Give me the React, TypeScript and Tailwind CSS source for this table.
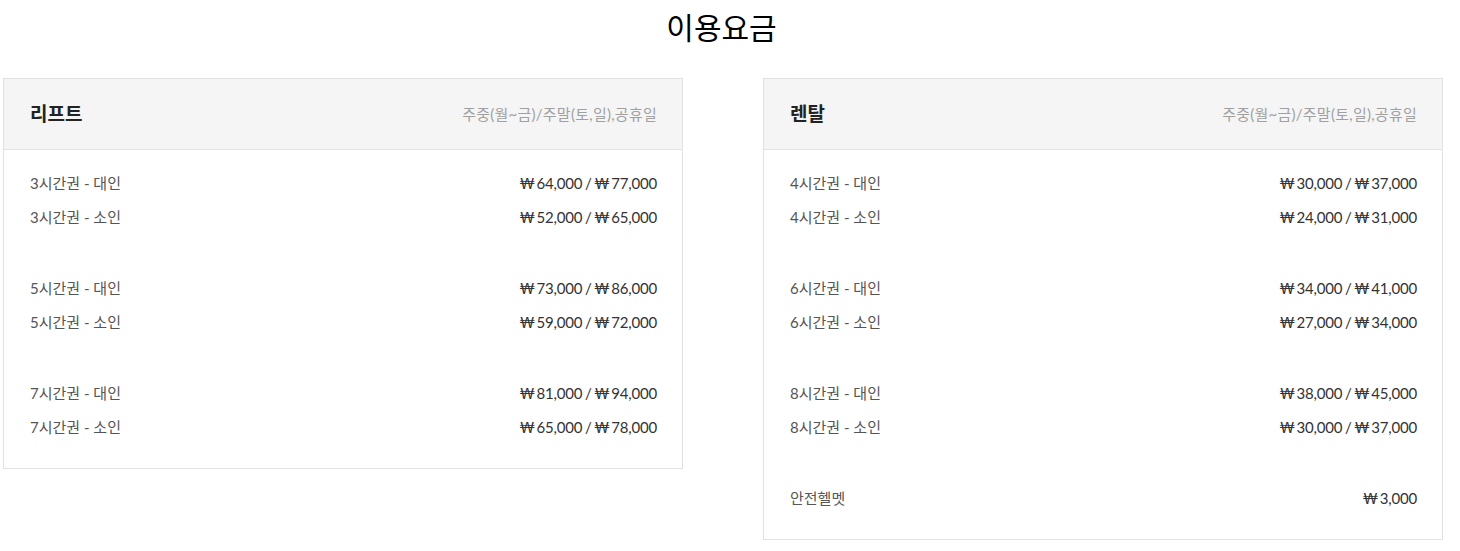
import React from 'react';

type Row = { label: string; price: string };

const lift: Row[][] = [
  [
    { label: '3시간권 - 대인', price: '₩64,000 / ₩77,000' },
    { label: '3시간권 - 소인', price: '₩52,000 / ₩65,000' },
  ],
  [
    { label: '5시간권 - 대인', price: '₩73,000 / ₩86,000' },
    { label: '5시간권 - 소인', price: '₩59,000 / ₩72,000' },
  ],
  [
    { label: '7시간권 - 대인', price: '₩81,000 / ₩94,000' },
    { label: '7시간권 - 소인', price: '₩65,000 / ₩78,000' },
  ],
];

const rental: Row[][] = [
  [
    { label: '4시간권 - 대인', price: '₩30,000 / ₩37,000' },
    { label: '4시간권 - 소인', price: '₩24,000 / ₩31,000' },
  ],
  [
    { label: '6시간권 - 대인', price: '₩34,000 / ₩41,000' },
    { label: '6시간권 - 소인', price: '₩27,000 / ₩34,000' },
  ],
  [
    { label: '8시간권 - 대인', price: '₩38,000 / ₩45,000' },
    { label: '8시간권 - 소인', price: '₩30,000 / ₩37,000' },
  ],
  [{ label: '안전헬멧', price: '₩3,000' }],
];

// small gap after each won sign, tighter spacing round the slash
const Price: React.FC<{ value: string }> = ({ value }) => (
  <span className="text-[#333] tracking-[-0.2px] [word-spacing:-1px]">
    {value.split('₩').map((part, i) =>
      i === 0 ? (
        part
      ) : (
        <React.Fragment key={i}>
          <span className="mr-[1.5px]">₩</span>
          {part}
        </React.Fragment>
      )
    )}
  </span>
);

const PriceCard: React.FC<{ title: string; groups: Row[][] }> = ({ title, groups }) => (
  <div className="w-[680px] self-start border border-[#e2e2e2] bg-white">
    <div className="h-[71px] flex items-center justify-between pl-[26px] pr-[25px] bg-[#f5f5f5] border-b border-[#e2e2e2]">
      <h2 className="text-[19px] font-bold text-[#222]">{title}</h2>
      <span className="text-[15px] text-[#a0a0a0] tracking-[0.25px]">주중(월~금)/주말(토,일),공휴일</span>
    </div>
    <div className="pl-[26px] pr-[25px] pt-[16px] pb-[24px] flex flex-col gap-[37px]">
      {groups.map((g, i) => (
        <div key={i}>
          {g.map((r) => (
            <div key={r.label} className="h-[34px] flex items-center justify-between text-[15px]">
              <span className="text-[#555]">{r.label}</span>
              <Price value={r.price} />
            </div>
          ))}
        </div>
      ))}
    </div>
  </div>
);

export default function App() {
  return (
    <div className="w-[1443px] bg-white font-['Lato','Noto_Sans_CJK_KR',sans-serif]">
      <h1 className="h-[50px] pt-[4px] text-center text-[30px] text-black font-['Noto_Sans_CJK_KR',sans-serif] leading-[44px]">
        이용요금
      </h1>
      <div className="mt-[28px] pl-[3px] flex gap-[80px] pb-[11px]">
        <PriceCard title="리프트" groups={lift} />
        <PriceCard title="렌탈" groups={rental} />
      </div>
    </div>
  );
}
